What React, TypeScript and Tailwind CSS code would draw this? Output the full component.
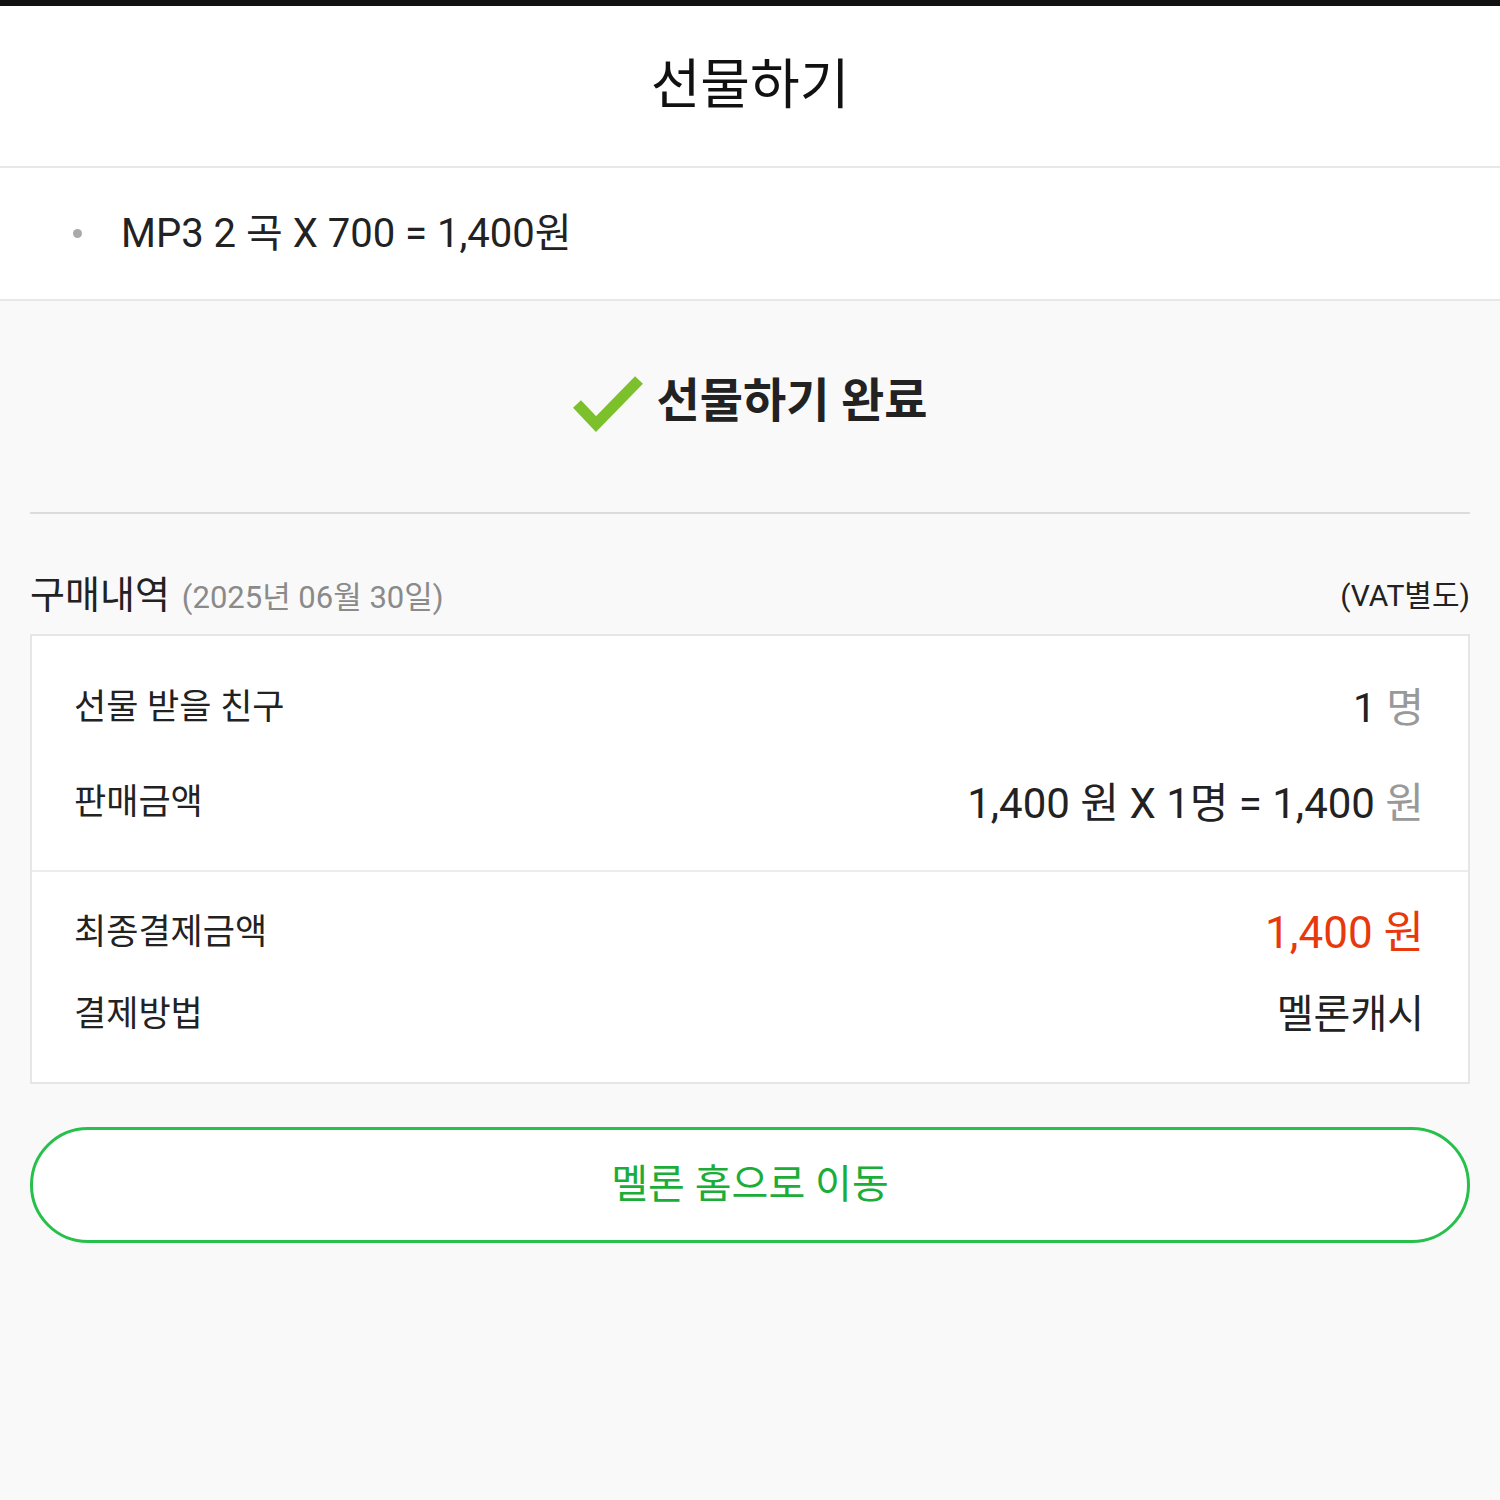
const font = "font-['Roboto','Noto_Sans_CJK_KR',sans-serif]";

function Row({ label, children }: { label: string; children: React.ReactNode }) {
  return (
    <div className="flex items-center justify-between">
      <span className="text-[35px] text-[#222]">{label}</span>
      <span className="text-right">{children}</span>
    </div>
  );
}

export default function App() {
  return (
    <div className={`${font} w-[1500px] min-h-[1500px] bg-[#f9f9f9] text-[#222]`}>
      <div className="h-[6px] bg-[#111]" />

      {/* header */}
      <header className="h-[162px] bg-white flex items-center justify-center border-b-2 border-[#e8e8e8]">
        <h1 className="text-[54px] leading-none text-[#111]">선물하기</h1>
      </header>

      {/* item */}
      <div className="h-[133px] bg-white flex items-center pl-[73px] border-b-2 border-[#e8e8e8]">
        <span className="w-[9px] h-[9px] rounded-full bg-[#aaa] mr-[39px]" />
        <span className="text-[40px] leading-none text-[#222]">MP3 2 곡 X 700 = 1,400원</span>
      </div>

      <div className="px-[30px]">
        {/* done */}
        <div className="h-[213px] pb-[12px] flex items-center justify-center gap-[12px] border-b-2 border-[#dcdcdc]">
          <svg width="72" height="58" viewBox="0 0 72 58" className="mt-[4px]">
            <polyline points="5,30 24,50 67,6" fill="none" stroke="#7cc02c" strokeWidth="11" strokeLinejoin="miter" />
          </svg>
          <span className="text-[47px] font-bold leading-none text-[#222]">선물하기 완료</span>
        </div>

        {/* heading */}
        <div className="h-[120px] pt-[42px] flex items-center justify-between">
          <div className="flex items-baseline gap-[12px]">
            <span className="text-[38px] text-[#222]">구매내역</span>
            <span className="text-[31px] text-[#8a8a8a]">(2025년 06월 30일)</span>
          </div>
          <span className="text-[30px] text-[#222]">(VAT별도)</span>
        </div>

        {/* box */}
        <div className="bg-white border-2 border-[#e6e6e6]">
          <div className="pl-[42px] pr-[44px] pt-[25px] pb-[19px] border-b-2 border-[#ececec]">
            <div className="h-[95px]">
              <Row label="선물 받을 친구">
                <span className="text-[41px] leading-[95px]">1 <span className="text-[#999]">명</span></span>
              </Row>
            </div>
            <div className="h-[95px]">
              <Row label="판매금액">
                <span className="text-[42px] leading-[95px]">
                  1,400 원 X 1명 = 1,400 <span className="text-[#999]">원</span>
                </span>
              </Row>
            </div>
          </div>
          <div className="pl-[42px] pr-[44px] pt-[20px] pb-[26px]">
            <div className="h-[82px]">
              <Row label="최종결제금액">
                <span className="text-[44px] leading-[82px] text-[#e8380d]">1,400 원</span>
              </Row>
            </div>
            <div className="h-[82px]">
              <Row label="결제방법">
                <span className="text-[40px] leading-[82px]">멜론캐시</span>
              </Row>
            </div>
          </div>
        </div>

        {/* button */}
        <button
          type="button"
          className="mt-[43px] w-full h-[116px] rounded-full border-[3px] border-[#26c04b] bg-white flex items-center justify-center"
        >
          <span className="text-[40px] leading-none text-[#1aae38]">멜론 홈으로 이동</span>
        </button>
      </div>
    </div>
  );
}
